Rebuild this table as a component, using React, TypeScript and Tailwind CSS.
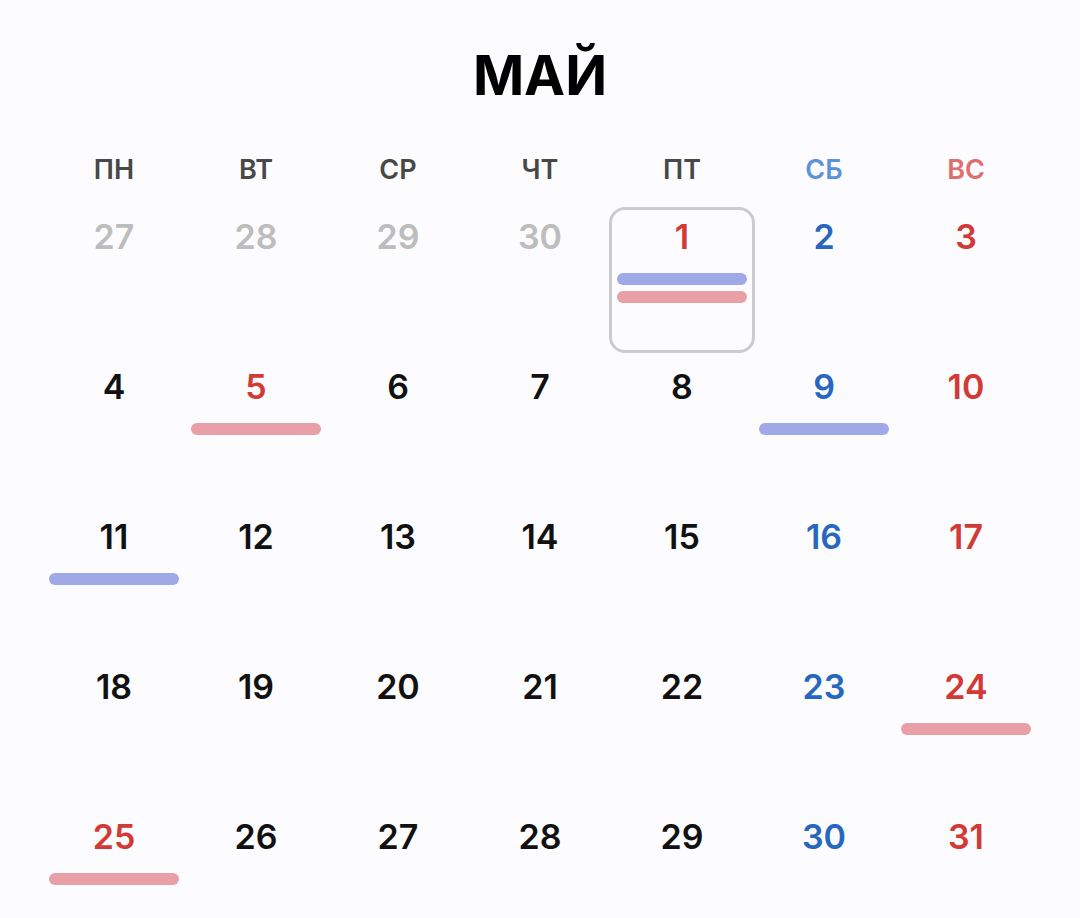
import React from 'react';

type Tone = 'muted' | 'normal' | 'sat' | 'sun';

type Day = {
  n: number;
  tone: Tone;
  bars?: ('blue' | 'red')[];
  selected?: boolean;
};

const weekdays = [
  { label: 'ПН', cls: 'text-[#484848]' },
  { label: 'ВТ', cls: 'text-[#484848]' },
  { label: 'СР', cls: 'text-[#484848]' },
  { label: 'ЧТ', cls: 'text-[#484848]' },
  { label: 'ПТ', cls: 'text-[#484848]' },
  { label: 'СБ', cls: 'text-[#5b92d8]' },
  { label: 'ВС', cls: 'text-[#df6f6f]' },
];

const toneClass: Record<Tone, string> = {
  muted: 'text-[#bdbdbd]',
  normal: 'text-[#111111]',
  sat: 'text-[#2767c0]',
  sun: 'text-[#d13a36]',
};

const barClass = {
  blue: 'bg-[#9fa9e8]',
  red: 'bg-[#e89fa5]',
};

// May, week starts Monday
const days: Day[] = [
  { n: 27, tone: 'muted' },
  { n: 28, tone: 'muted' },
  { n: 29, tone: 'muted' },
  { n: 30, tone: 'muted' },
  { n: 1, tone: 'sun', bars: ['blue', 'red'], selected: true },
  { n: 2, tone: 'sat' },
  { n: 3, tone: 'sun' },
  { n: 4, tone: 'normal' },
  { n: 5, tone: 'sun', bars: ['red'] },
  { n: 6, tone: 'normal' },
  { n: 7, tone: 'normal' },
  { n: 8, tone: 'normal' },
  { n: 9, tone: 'sat', bars: ['blue'] },
  { n: 10, tone: 'sun' },
  { n: 11, tone: 'normal', bars: ['blue'] },
  { n: 12, tone: 'normal' },
  { n: 13, tone: 'normal' },
  { n: 14, tone: 'normal' },
  { n: 15, tone: 'normal' },
  { n: 16, tone: 'sat' },
  { n: 17, tone: 'sun' },
  { n: 18, tone: 'normal' },
  { n: 19, tone: 'normal' },
  { n: 20, tone: 'normal' },
  { n: 21, tone: 'normal' },
  { n: 22, tone: 'normal' },
  { n: 23, tone: 'sat' },
  { n: 24, tone: 'sun', bars: ['red'] },
  { n: 25, tone: 'sun', bars: ['red'] },
  { n: 26, tone: 'normal' },
  { n: 27, tone: 'normal' },
  { n: 28, tone: 'normal' },
  { n: 29, tone: 'normal' },
  { n: 30, tone: 'sat' },
  { n: 31, tone: 'sun' },
];

function DayCell({ day }: { day: Day }) {
  return (
    <div
      className={`w-[146px] h-[146px] flex flex-col items-center pt-[7px] rounded-[16px] border-[3px] ${
        day.selected ? 'border-[#cccccc]' : 'border-transparent'
      }`}
    >
      <span className={`text-[34px] leading-[40px] font-semibold ${toneClass[day.tone]}`}>{day.n}</span>
      <div className="mt-[16px] flex flex-col gap-[6px]">
        {day.bars?.map((b, i) => (
          <div key={i} className={`w-[130px] h-[12px] rounded-full ${barClass[b]}`} />
        ))}
      </div>
    </div>
  );
}

export default function App() {
  return (
    <div
      className="min-h-[918px] w-full bg-[#fcfcfe] flex flex-col items-center pt-[41px]"
      style={{ fontFamily: 'Inter, "Noto Sans", sans-serif' }}
    >
      {/* Month title */}
      <h1 className="text-[55px] leading-[68px] font-bold text-black">МАЙ</h1>

      {/* Weekday header */}
      <div className="mt-[45px] grid grid-cols-[repeat(7,142px)] justify-items-center">
        {weekdays.map((w) => (
          <span key={w.label} className={`text-[27px] leading-[32px] font-semibold ${w.cls}`}>
            {w.label}
          </span>
        ))}
      </div>

      {/* Days */}
      <div className="mt-[21px] grid grid-cols-[repeat(7,142px)] justify-items-center gap-y-[4px]">
        {days.map((d, i) => (
          <DayCell key={i} day={d} />
        ))}
      </div>
    </div>
  );
}
